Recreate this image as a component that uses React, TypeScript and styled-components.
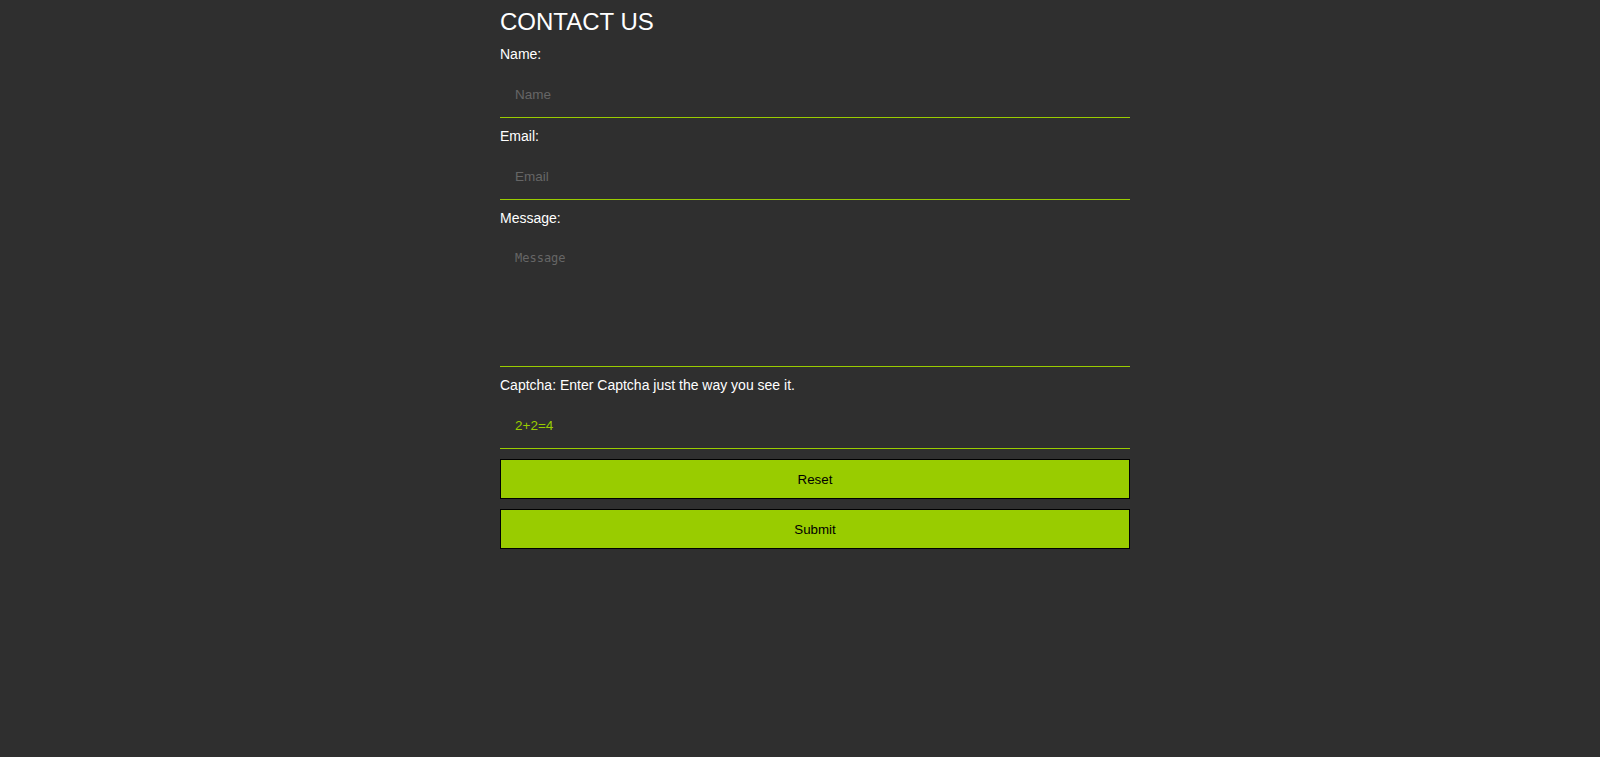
import styled, { createGlobalStyle } from 'styled-components';

const GlobalStyle = createGlobalStyle`
  html, body {
    margin: 0;
    background: #2f2f2f;
  }
  body {
    font-family: "Liberation Sans", Arial, sans-serif;
    color: #fff;
  }
`;

const Page = styled.div`
  min-height: 757px;
  padding-top: 8px;
  box-sizing: border-box;
`;
const Form = styled.form`
  width: 630px;
  margin-left: 500px;
`;
const Title = styled.h1`
  margin: 0 0 10px;
  font-size: 24px;
  font-weight: 400;
  color: #fff;
`;
const Label = styled.label`
  display: block;
  font-size: 14px;
  color: #fff;
`;
const fieldStyle = `
  display: block;
  width: 100%;
  box-sizing: border-box;
  margin: 10px 0;
  padding: 15px;
  border: none;
  border-bottom: 1px solid #99cc00;
  background: transparent;
  color: #99cc00;
  outline: none;
  &::placeholder {
    color: #666;
  }
`;
const Input = styled.input`
  ${fieldStyle}
  font-family: "Liberation Sans", Arial, sans-serif;
  font-size: 13.5px;
`;
const TextArea = styled.textarea`
  ${fieldStyle}
  height: 131px;
  resize: none;
  font-family: "DejaVu Sans Mono", "Liberation Mono", monospace;
  font-size: 12px;
`;
const Button = styled.button`
  display: block;
  width: 100%;
  height: 40px;
  margin-bottom: 10px;
  border: 1px solid #000;
  background: #99cc00;
  color: #000;
  font-family: "Liberation Sans", Arial, sans-serif;
  font-size: 13.333px;
  cursor: pointer;
`;

export default function App() {
  return (
    <Page>
      <GlobalStyle />
      <Form onSubmit={(e) => e.preventDefault()}>
        <Title>CONTACT US</Title>
        <Label htmlFor="name">Name:</Label>
        <Input id="name" type="text" placeholder="Name" />
        <Label htmlFor="email">Email:</Label>
        <Input id="email" type="email" placeholder="Email" />
        <Label htmlFor="message">Message:</Label>
        <TextArea id="message" placeholder="Message" />
        <Label htmlFor="captcha">Captcha: Enter Captcha just the way you see it.</Label>
        <Input id="captcha" type="text" defaultValue="2+2=4" />
        <Button type="reset">Reset</Button>
        <Button type="submit">Submit</Button>
      </Form>
    </Page>
  );
}
